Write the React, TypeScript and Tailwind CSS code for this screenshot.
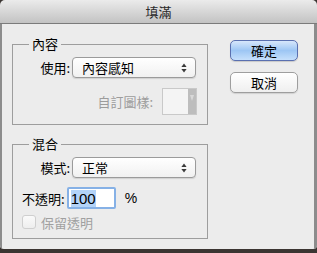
const font = { fontFamily: '"Noto Sans CJK TC", "Noto Sans CJK SC", "Liberation Sans", sans-serif' };

function Stepper({ disabled = false }: { disabled?: boolean }) {
  const c = disabled ? "#9a9a9a" : "#3a3a3a";
  return (
    <svg width="6" height="10" viewBox="0 0 6 10">
      <path d="M3 0.5 L5.6 4 L0.4 4 Z" fill={c} />
      <path d="M3 9.5 L5.6 6 L0.4 6 Z" fill={c} />
    </svg>
  );
}

function Select({ value }: { value: string }) {
  return (
    <div className="flex h-[21px] w-[124px] items-center justify-between rounded-[4px] border border-[#9b9b9b] bg-gradient-to-b from-white to-[#f1f1f1] pl-[9px] pr-[8px] shadow-[0_1px_1px_rgba(0,0,0,0.12)]">
      <span className="text-[13px] leading-none text-black">{value}</span>
      <Stepper />
    </div>
  );
}

function Group({ title, children }: { title: string; children: React.ReactNode }) {
  return (
    <fieldset className="w-[196px] border border-[#9d9d9d] px-0 pb-[9px]">
      <legend className="ml-[16px] px-[3px] text-[13px] leading-[16px] text-black">{title}</legend>
      {children}
    </fieldset>
  );
}

function Button({ label, primary = false }: { label: string; primary?: boolean }) {
  return (
    <div
      className={
        primary
          ? "flex h-[21px] w-[68px] items-center justify-center rounded-[5px] border border-[#5a70b0] bg-gradient-to-b from-[#d7e7fb] via-[#9dc6f4] to-[#c6e0fc] text-[13px] text-black shadow-[0_1px_1px_rgba(0,0,0,0.15)]"
          : "flex h-[21px] w-[68px] items-center justify-center rounded-[5px] border border-[#9e9e9e] bg-gradient-to-b from-white to-[#efefef] text-[13px] text-black shadow-[0_1px_1px_rgba(0,0,0,0.12)]"
      }
    >
      {label}
    </div>
  );
}

export default function App() {
  return (
    <div className="h-[253px] w-[317px] overflow-hidden bg-[#3b3532]" style={font}>
      <div className="flex h-[249px] flex-col overflow-hidden rounded-b-[4px]">
        {/* Title bar */}
        <div className="flex h-[24px] shrink-0 items-center justify-center rounded-t-[5px] border-b border-[#7b7b7b] bg-gradient-to-b from-[#ebebeb] to-[#c3c3c3] text-[13px] text-[#2a2a2a]">
          填滿
        </div>

        {/* Body */}
        <div className="flex flex-1 border-l-2 border-r-[3px] border-[#8c8c8c] bg-[#ececec]">
          <div className="flex flex-col pl-[10px] pt-[12px]">
            <Group title="內容">
              <div className="mt-[5px] flex items-center gap-[2px]">
                <span className="w-[57px] text-right text-[13px] leading-none text-black">使用:</span>
                <Select value="內容感知" />
              </div>
              <div className="mt-[10px] flex items-center justify-end pr-[10px]">
                <span className="mr-[9px] text-[13px] leading-none text-[#9c9c9c]">自訂圖樣:</span>
                <div className="flex h-[27px] w-[35px] border border-[#c9c9c9] bg-[#f4f4f4]">
                  <div className="flex-1" />
                  <div className="flex w-[8px] items-start justify-center bg-[#bdbdbd] pt-[6px]">
                    <svg width="4" height="6" viewBox="0 0 4 6">
                      <path d="M0 0 L4 0 L2 6 Z" fill="#d8d8d8" />
                    </svg>
                  </div>
                </div>
              </div>
            </Group>

            <div className="mt-[11px]">
              <Group title="混合">
                <div className="mt-[5px] flex items-center gap-[2px]">
                  <span className="w-[57px] text-right text-[13px] leading-none text-black">模式:</span>
                  <Select value="正常" />
                </div>
                <div className="mt-[9px] flex items-center pl-[9px]">
                  <span className="text-[13px] leading-none text-black">不透明:</span>
                  <div className="ml-[2px] flex h-[22px] w-[49px] items-center rounded-[2px] border-2 border-[#86b1e6] bg-white pl-[2px]">
                    <span className="bg-[#b3d3f8] text-[15px] leading-[17px] text-black" style={{ fontFamily: '"Liberation Sans", sans-serif' }}>
                      100
                    </span>
                  </div>
                  <span className="ml-[9px] text-[14px] leading-none text-black" style={{ fontFamily: '"Liberation Sans", sans-serif' }}>
                    %
                  </span>
                </div>
                <div className="mt-[6px] flex items-center pl-[9px]">
                  <div className="h-[14px] w-[14px] rounded-[3px] border border-[#cfcfcf] bg-gradient-to-b from-[#fafafa] to-[#eeeeee]" />
                  <span className="ml-[5px] text-[13px] leading-none text-[#a0a0a0]">保留透明</span>
                </div>
              </Group>
            </div>
          </div>

          <div className="ml-[22px] flex flex-col gap-[11px] pt-[16px]">
            <Button label="確定" primary />
            <Button label="取消" />
          </div>
        </div>
      </div>
    </div>
  );
}
